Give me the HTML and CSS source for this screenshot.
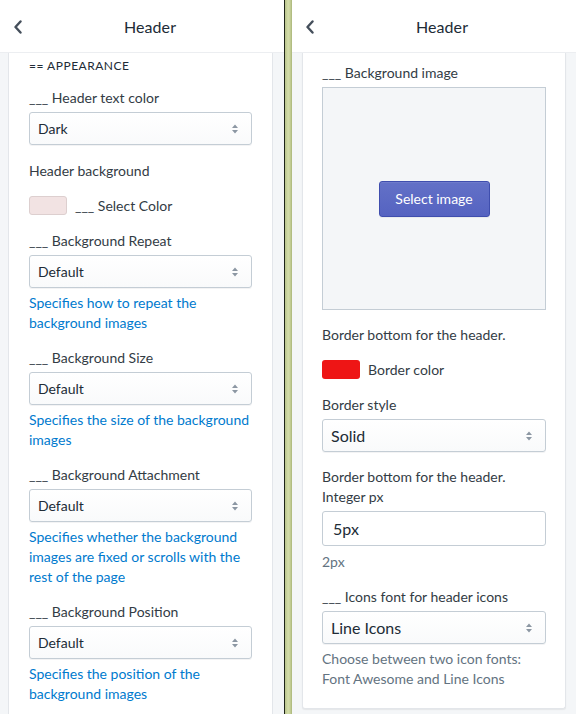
FILE: index.html
```html
<!DOCTYPE html>
<html>
<head>
<meta charset="utf-8">
<link rel="stylesheet" href="styles.css">
</head>
<body>
<div class="app">
  <section class="panel panel-left">
    <header class="topbar">
      <span class="back"><svg width="10" height="14" viewBox="0 0 10 14"><path d="M7.5 1.5 L2.5 7 L7.5 12.5" fill="none" stroke="#454f5b" stroke-width="2.4" stroke-linecap="round" stroke-linejoin="round"/></svg></span>
      <h1 class="title">Header</h1>
    </header>
    <div class="scroll">
      <div class="card card-left">
        <div class="heading">== APPEARANCE</div>

        <div class="field">
          <div class="label">___ Header text color</div>
          <div class="select"><span>Dark</span><svg class="arrows" width="8" height="10" viewBox="0 0 8 10"><path d="M4 0.5 L7 4 H1 Z M4 9.5 L1 6 H7 Z" fill="#8c97a3"/></svg></div>
        </div>

        <div class="field field-swatch">
          <div class="label label-spaced">Header background</div>
          <div class="swatch-row"><span class="swatch swatch-pink"></span><span class="swatch-label">___ Select Color</span></div>
        </div>

        <div class="field">
          <div class="label">___ Background Repeat</div>
          <div class="select"><span>Default</span><svg class="arrows" width="8" height="10" viewBox="0 0 8 10"><path d="M4 0.5 L7 4 H1 Z M4 9.5 L1 6 H7 Z" fill="#8c97a3"/></svg></div>
          <p class="help help-blue">Specifies how to repeat the background images</p>
        </div>

        <div class="field">
          <div class="label">___ Background Size</div>
          <div class="select"><span>Default</span><svg class="arrows" width="8" height="10" viewBox="0 0 8 10"><path d="M4 0.5 L7 4 H1 Z M4 9.5 L1 6 H7 Z" fill="#8c97a3"/></svg></div>
          <p class="help help-blue">Specifies the size of the background images</p>
        </div>

        <div class="field">
          <div class="label">___ Background Attachment</div>
          <div class="select"><span>Default</span><svg class="arrows" width="8" height="10" viewBox="0 0 8 10"><path d="M4 0.5 L7 4 H1 Z M4 9.5 L1 6 H7 Z" fill="#8c97a3"/></svg></div>
          <p class="help help-blue">Specifies whether the background images are fixed or scrolls with the rest of the page</p>
        </div>

        <div class="field">
          <div class="label">___ Background Position</div>
          <div class="select"><span>Default</span><svg class="arrows" width="8" height="10" viewBox="0 0 8 10"><path d="M4 0.5 L7 4 H1 Z M4 9.5 L1 6 H7 Z" fill="#8c97a3"/></svg></div>
          <p class="help help-blue">Specifies the position of the background images</p>
        </div>
      </div>
    </div>
  </section>

  <div class="splitter"><span class="split-line"></span><span class="split-bar"></span></div>

  <section class="panel panel-right">
    <header class="topbar">
      <span class="back"><svg width="10" height="14" viewBox="0 0 10 14"><path d="M7.5 1.5 L2.5 7 L7.5 12.5" fill="none" stroke="#454f5b" stroke-width="2.4" stroke-linecap="round" stroke-linejoin="round"/></svg></span>
      <h1 class="title">Header</h1>
    </header>
    <div class="scroll">
      <div class="card card-right">
        <div class="field">
          <div class="label">___ Background image</div>
          <div class="image-box"><button class="btn-primary">Select image</button></div>
        </div>

        <div class="field field-swatch">
          <div class="label">Border bottom for the header.</div>
          <div class="swatch-row"><span class="swatch swatch-red"></span><span class="swatch-label">Border color</span></div>
        </div>

        <div class="field">
          <div class="label">Border style</div>
          <div class="select select-lg"><span>Solid</span><svg class="arrows" width="8" height="10" viewBox="0 0 8 10"><path d="M4 0.5 L7 4 H1 Z M4 9.5 L1 6 H7 Z" fill="#8c97a3"/></svg></div>
        </div>

        <div class="field">
          <div class="label">Border bottom for the header.<br>Integer px</div>
          <div class="input">5px</div>
          <p class="help help-gray help-tight">2px</p>
        </div>

        <div class="field field-last">
          <div class="label">___ Icons font for header icons</div>
          <div class="select select-lg"><span>Line Icons</span><svg class="arrows" width="8" height="10" viewBox="0 0 8 10"><path d="M4 0.5 L7 4 H1 Z M4 9.5 L1 6 H7 Z" fill="#8c97a3"/></svg></div>
          <p class="help help-gray">Choose between two icon fonts: Font Awesome and Line Icons</p>
        </div>
      </div>
    </div>
  </section>
</div>
</body>
</html>
```

FILE: styles.css
```css
* { box-sizing: border-box; }

html, body {
  margin: 0;
  padding: 0;
  height: 100%;
}

body {
  font-family: "Lato", "Liberation Sans", sans-serif;
  font-size: 14px;
  color: #333c45;
  background: #f4f6f8;
  overflow: hidden;
}

.app {
  display: flex;
  height: 714px;
}

.panel {
  width: 284px;
  flex: none;
  display: flex;
  flex-direction: column;
  background: #f4f6f8;
  overflow: hidden;
}

.topbar {
  height: 52px;
  flex: none;
  background: #fff;
  display: flex;
  align-items: center;
  position: relative;
  box-shadow: 0 1px 0 #eceef1;
  z-index: 1;
}

.back {
  position: absolute;
  left: 13px;
  top: 20px;
  width: 10px;
  height: 14px;
  display: flex;
}

.title {
  flex: 1;
  margin: 0;
  padding-left: 16px;
  text-align: center;
  font-size: 16px;
  font-weight: 400;
  color: #212b36;
  letter-spacing: 0.1px;
}

.scroll {
  flex: 1;
  overflow: hidden;
}

.card {
  background: #fff;
  border: 1px solid #e3e6ea;
  border-top: none;
}

.card-left {
  margin-left: 8px;
  width: 265px;
  min-height: 100%;
  padding: 4px 20px 0;
}

.card-right {
  margin-left: 10px;
  width: 264px;
  padding: 11px 19px 19px;
  border-radius: 0 0 3px 3px;
  box-shadow: 0 1px 1px rgba(63, 63, 68, 0.08);
}

.heading {
  font-size: 12px;
  line-height: 20px;
  letter-spacing: 0.5px;
  color: #212b36;
  margin-bottom: 12px;
}

.field {
  margin-bottom: 15px;
}

.field-swatch {
  margin-bottom: 16px;
}

.field-last {
  margin-bottom: 0;
}

.label {
  line-height: 20px;
  margin-bottom: 4px;
  color: #333c45;
}

.label-spaced {
  padding-top: 1px;
}

.select {
  height: 33px;
  border: 1px solid #c4cdd5;
  border-radius: 3px;
  background: linear-gradient(#fff, #f9fafb);
  box-shadow: 0 1px 0 rgba(22, 29, 37, 0.05);
  display: flex;
  align-items: center;
  justify-content: space-between;
  padding: 0 12px 0 8px;
  color: #212b36;
  font-size: 14px;
}

.select-lg {
  font-size: 16px;
}

.arrows {
  flex: none;
}

.input {
  height: 35px;
  border: 1px solid #c4cdd5;
  border-radius: 3px;
  background: #fff;
  display: flex;
  align-items: center;
  padding: 0 10px;
  font-size: 16px;
  color: #212b36;
}

.help {
  margin: 5px 0 0;
  line-height: 20px;
}

.help-tight {
  margin-top: 6px;
}

.help-blue {
  color: #007ace;
}

.help-gray {
  color: #637381;
}

.swatch-row {
  display: flex;
  align-items: center;
  height: 20px;
  margin-top: 14px;
}

.swatch {
  width: 38px;
  height: 19px;
  border-radius: 3px;
  flex: none;
}

.swatch-pink {
  background: #f2e3e3;
  border: 1px solid #ddcfcf;
}

.swatch-red {
  background: #ee1515;
}

.swatch-label {
  margin-left: 8px;
  color: #333c45;
}

.image-box {
  height: 223px;
  border: 1px solid #c4cdd5;
  background: #f4f6f8;
  display: flex;
  align-items: center;
  justify-content: center;
}

.btn-primary {
  width: 111px;
  height: 36px;
  border: 1px solid #3f4eae;
  border-radius: 3px;
  background: linear-gradient(#6371c7, #5563c1);
  box-shadow: inset 0 1px 0 0 #6f7bcb, 0 1px 0 0 rgba(22, 29, 37, 0.05);
  color: #fff;
  font-family: inherit;
  font-size: 14px;
  padding: 0;
  margin-top: 0;
}

.splitter {
  width: 8px;
  flex: none;
  display: flex;
}

.split-line {
  width: 1px;
  background: #1e2418;
}

.split-bar {
  width: 7px;
  background: linear-gradient(90deg, #b9c48c, #d4ddaa 45%, #c9d39c 70%, #aab67a);
}
```
